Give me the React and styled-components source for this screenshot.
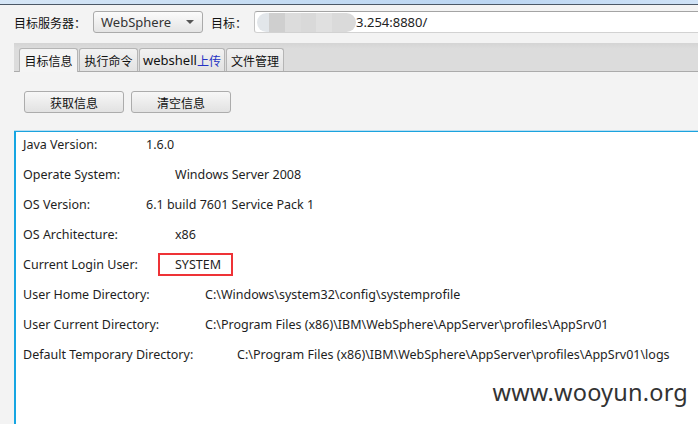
import styled, { createGlobalStyle } from 'styled-components';

const GlobalStyle = createGlobalStyle`
    html, body {
        margin: 0;
        padding: 0;
        background: #f3f3f3;
    }
    body {
        font-family: "Noto Sans", "Noto Sans CJK SC", sans-serif;
        color: #222;
    }
`;

const Frame = styled.div`
    position: relative;
    width: 698px;
    height: 424px;
    overflow: hidden;
    display: flex;
    flex-direction: column;
    background: #f3f3f3;
`;

const TitleStrip = styled.div`
    height: 4px;
    background: linear-gradient(90deg, #d6e6f6 0%, #c5dcf3 40%, #bcd6f2 70%, #cfe2f6 100%);
    border-bottom: 1px solid #4c5866;
`;

const Toolbar = styled.div`
    display: flex;
    align-items: center;
    height: 22px;
    margin-top: 6px;
    padding-left: 14px;
`;

const FieldLabel = styled.span`
    font-family: "Noto Sans CJK SC", sans-serif;
    font-size: 12px;
    color: #111;
    margin-left: ${p => p.$gap || 0}px;
    white-space: nowrap;
`;

const Combo = styled.div`
    box-sizing: border-box;
    width: 110px;
    height: 22px;
    margin-left: 7px;
    display: flex;
    align-items: center;
    justify-content: space-between;
    padding: 0 8px 0 7px;
    border: 1px solid #aaaaaa;
    border-radius: 3px;
    background: linear-gradient(#fbfbfb, #e4e4e4);
    font-family: "Noto Sans", sans-serif;
    font-size: 13px;
    color: #333;
`;

const Caret = styled.span`
    width: 0;
    height: 0;
    border-left: 4px solid transparent;
    border-right: 4px solid transparent;
    border-top: 4px solid #555;
`;

const UrlInput = styled.div`
    box-sizing: border-box;
    flex: 1;
    height: 22px;
    margin-left: 7px;
    display: flex;
    align-items: center;
    padding-left: 2px;
    background: #fff;
    border-top: 1px solid #a4a4a4;
    border-left: 1px solid #c4c4c4;
    border-bottom: 1px solid #d2d2d2;
    border-radius: 3px 0 0 3px;
    font-family: "Noto Sans", sans-serif;
    font-size: 13px;
    color: #222;
`;

const Masked = styled.span`
    width: 99px;
    height: 19px;
    border-radius: 10px;
    background: linear-gradient(90deg,
        #e2e6ea 0 12%, #cfcfcf 12% 28%, #dcdcdc 28% 44%,
        #d9d9d9 44% 60%, #e0e0e0 60% 76%, #dadada 76% 100%);
`;

const TabStrip = styled.div`
    display: flex;
    align-items: flex-end;
    gap: 1px;
    height: 28px;
    margin: 10px 0 0 14px;
    padding-left: 5px;
    background: linear-gradient(#d4d4d4, #dcdcdc 20%, #dcdcdc);
    border-bottom: 1px solid #ababab;
`;

const Tab = styled.div`
    box-sizing: border-box;
    width: ${p => p.$width}px;
    height: ${p => (p.$active ? 24 : 23)}px;
    margin-bottom: ${p => (p.$active ? -1 : 0)}px;
    display: flex;
    align-items: center;
    justify-content: center;
    border: 1px solid #b5b5b5;
    border-bottom: none;
    border-radius: 3px 3px 0 0;
    background: ${p => (p.$active ? '#f4f4f4' : 'linear-gradient(#f2f2f2, #e2e2e2)')};
    font-family: "Noto Sans CJK SC", sans-serif;
    font-size: 12px;
    color: #111;
    white-space: nowrap;
`;

const Latin = styled.span`
    font-family: "Noto Sans", sans-serif;
    font-size: 13px;
`;

const Blue = styled.span`
    color: #2432c4;
`;

const ButtonRow = styled.div`
    display: flex;
    gap: 7px;
    padding: 19px 0 0 24px;
`;

const Button = styled.button`
    box-sizing: border-box;
    width: 100px;
    height: 22px;
    padding: 0;
    border: 1px solid #acacac;
    border-radius: 3px;
    background: linear-gradient(#f7f7f7, #e2e2e2);
    font-family: "Noto Sans CJK SC", sans-serif;
    font-size: 12px;
    color: #111;
`;

const Output = styled.div`
    flex: 1;
    margin: 18px 0 0 14px;
    padding: 2px 0 0 7px;
    background: #fff;
    border-top: 1px solid #1ba3de;
    border-left: 2px solid #16a6e2;
    box-shadow: 0 -1px 0 #b8def2;
    display: flex;
    flex-direction: column;
    gap: 10px;
`;

const Row = styled.div`
    display: flex;
    align-items: center;
    height: 20px;
    font-family: "Noto Sans", sans-serif;
    font-size: 12.5px;
    color: #1e1e1e;
    white-space: nowrap;
`;

const Key = styled.span`
    flex: none;
    width: ${p => p.$tab}px;
`;

const Value = styled.span`
    position: relative;
`;

const Highlight = styled.span`
    position: absolute;
    box-sizing: border-box;
    left: -17px;
    top: -3px;
    width: 75px;
    height: 23px;
    border: 2.5px solid #ee3236;
`;

const Watermark = styled.div`
    position: absolute;
    right: 10px;
    top: 376px;
    font-family: "Noto Sans", sans-serif;
    font-size: 23.5px;
    color: #333;
    letter-spacing: 0.2px;
`;

const info = [
    ['Java Version:', '1.6.0', 123],
    ['Operate System:', 'Windows Server 2008', 152],
    ['OS Version:', '6.1 build 7601 Service Pack 1', 123],
    ['OS Architecture:', 'x86', 152],
    ['Current Login User:', 'SYSTEM', 152, true],
    ['User Home Directory:', 'C:\\Windows\\system32\\config\\systemprofile', 182],
    ['User Current Directory:', 'C:\\Program Files (x86)\\IBM\\WebSphere\\AppServer\\profiles\\AppSrv01', 182],
    ['Default Temporary Directory:', 'C:\\Program Files (x86)\\IBM\\WebSphere\\AppServer\\profiles\\AppSrv01\\logs', 214],
];

function App() {
    return (
        <Frame>
            <GlobalStyle />
            <TitleStrip />

            <Toolbar>
                <FieldLabel>目标服务器：</FieldLabel>
                <Combo>
                    WebSphere
                    <Caret />
                </Combo>
                <FieldLabel $gap={8}>目标：</FieldLabel>
                <UrlInput>
                    <Masked />
                    3.254:8880/
                </UrlInput>
            </Toolbar>

            <TabStrip>
                <Tab $active $width={59}>目标信息</Tab>
                <Tab $width={59}>执行命令</Tab>
                <Tab $width={86}><Latin>webshell</Latin><Blue>上传</Blue></Tab>
                <Tab $width={58}>文件管理</Tab>
            </TabStrip>

            <ButtonRow>
                <Button>获取信息</Button>
                <Button>清空信息</Button>
            </ButtonRow>

            <Output>
                {info.map(([key, value, tab, marked]) => (
                    <Row key={key}>
                        <Key $tab={tab}>{key}</Key>
                        <Value>
                            {marked && <Highlight />}
                            {value}
                        </Value>
                    </Row>
                ))}
            </Output>

            <Watermark>www.wooyun.org</Watermark>
        </Frame>
    )
}

export default App
